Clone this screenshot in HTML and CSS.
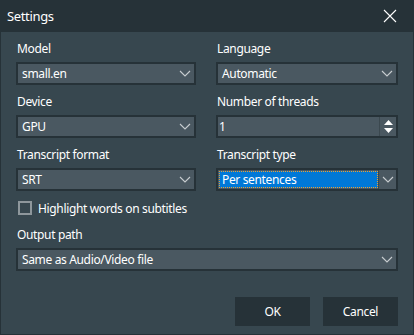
FILE: index.html
```html
<!DOCTYPE html>
<html lang="en">
<head>
    <meta charset="UTF-8">
    <meta name="viewport" content="width=device-width, initial-scale=1.0">
    <title>Settings</title>
    <link rel="stylesheet" href="styles.css">
</head>
<body>
    <div class="window">
        <div class="titlebar">
            <span class="title">Settings</span>
            <svg class="close" width="14" height="14" viewBox="0 0 14 14">
                <path d="M1 1 L13 13 M13 1 L1 13" stroke="#ffffff" stroke-width="1.1" fill="none"/>
            </svg>
        </div>

        <div class="content">
            <div class="grid">
                <div class="field">
                    <label>Model</label>
                    <div class="combo">
                        <span class="value">small.en</span>
                        <svg class="chevron" width="12" height="7" viewBox="0 0 12 7"><path d="M1 1 L6 6 L11 1" stroke="#c8cdd0" stroke-width="1.1" fill="none"/></svg>
                    </div>
                </div>
                <div class="field">
                    <label>Language</label>
                    <div class="combo">
                        <span class="value">Automatic</span>
                        <svg class="chevron" width="12" height="7" viewBox="0 0 12 7"><path d="M1 1 L6 6 L11 1" stroke="#c8cdd0" stroke-width="1.1" fill="none"/></svg>
                    </div>
                </div>

                <div class="field">
                    <label>Device</label>
                    <div class="combo">
                        <span class="value">GPU</span>
                        <svg class="chevron" width="12" height="7" viewBox="0 0 12 7"><path d="M1 1 L6 6 L11 1" stroke="#c8cdd0" stroke-width="1.1" fill="none"/></svg>
                    </div>
                </div>
                <div class="field">
                    <label>Number of threads</label>
                    <div class="combo spin">
                        <span class="value">1</span>
                        <div class="spin-buttons">
                            <svg width="9" height="5" viewBox="0 0 9 5"><path d="M0 5 L4.5 0 L9 5 Z" fill="#ffffff"/></svg>
                            <svg width="9" height="5" viewBox="0 0 9 5"><path d="M0 0 L4.5 5 L9 0 Z" fill="#ffffff"/></svg>
                        </div>
                    </div>
                </div>

                <div class="field">
                    <label>Transcript format</label>
                    <div class="combo">
                        <span class="value">SRT</span>
                        <svg class="chevron" width="12" height="7" viewBox="0 0 12 7"><path d="M1 1 L6 6 L11 1" stroke="#c8cdd0" stroke-width="1.1" fill="none"/></svg>
                    </div>
                </div>
                <div class="field">
                    <label>Transcript type</label>
                    <div class="combo focused">
                        <span class="value selected">Per sentences</span>
                        <div class="arrow-box">
                            <svg class="chevron" width="12" height="7" viewBox="0 0 12 7"><path d="M1 1 L6 6 L11 1" stroke="#c8cdd0" stroke-width="1.1" fill="none"/></svg>
                        </div>
                    </div>
                </div>
            </div>

            <div class="check-row">
                <span class="checkbox"></span>
                <span>Highlight words on subtitles</span>
            </div>

            <div class="field">
                <label>Output path</label>
                <div class="combo">
                    <span class="value">Same as Audio/Video file</span>
                    <svg class="chevron" width="12" height="7" viewBox="0 0 12 7"><path d="M1 1 L6 6 L11 1" stroke="#c8cdd0" stroke-width="1.1" fill="none"/></svg>
                </div>
            </div>

            <div class="buttons">
                <button>OK</button>
                <button>Cancel</button>
            </div>
        </div>
    </div>
</body>
</html>
```

FILE: styles.css
```css
* {
    box-sizing: border-box;
}

body {
    margin: 0;
    padding: 0;
    background-color: #263238;
    font-family: "Noto Sans", "Open Sans", sans-serif;
    font-size: 12px;
    letter-spacing: -0.35px;
    color: #ffffff;
}

.window {
    width: 414px;
    height: 335px;
    background-color: #263238;
    padding: 0 1px 1px 1px;
    display: flex;
    flex-direction: column;
}

.titlebar {
    height: 32px;
    display: flex;
    align-items: center;
    justify-content: space-between;
    padding: 0 16px 0 6px;
}

.title {
    font-size: 13px;
    margin-top: -1px;
}

.close {
    margin-top: -1px;
}

.content {
    flex: 1;
    background-color: #37474f;
    padding: 9px 15px 8px 15px;
    display: flex;
    flex-direction: column;
}

.grid {
    display: grid;
    grid-template-columns: 180px 182px;
    column-gap: 20px;
    row-gap: 9px;
}

.field {
    display: flex;
    flex-direction: column;
}

.field label {
    height: 16px;
    line-height: 16px;
    margin-bottom: 5px;
    padding-left: 1px;
}

.combo {
    height: 23px;
    background-color: #4a5861;
    border: 2px solid #263238;
    display: flex;
    align-items: center;
    justify-content: space-between;
    padding: 0 3px 0 4px;
}

.combo .value {
    line-height: 17px;
}

.combo.spin {
    padding: 0 0 0 1px;
}

.spin-buttons {
    height: 100%;
    width: 17px;
    border-left: 1px solid #3b484f;
    display: flex;
    flex-direction: column;
    align-items: center;
    justify-content: center;
    gap: 3px;
}

.combo.focused {
    padding: 0;
}

.value.selected {
    flex: 1;
    height: 17px;
    margin-left: 1px;
    padding-left: 3px;
    background-color: #0078d7;
    outline: 1px dotted #f0a030;
    outline-offset: -1px;
}

.arrow-box {
    width: 18px;
    height: 100%;
    border-left: 1px solid #37474f;
    display: flex;
    align-items: center;
    justify-content: center;
}

.check-row {
    display: flex;
    align-items: center;
    gap: 6px;
    height: 16px;
    margin: 9px 0 11px 2px;
}

.checkbox {
    width: 14px;
    height: 14px;
    border: 2px solid #8e979c;
    background-color: #37474f;
}

.buttons {
    margin-top: auto;
    display: flex;
    justify-content: flex-end;
    gap: 13px;
}

button {
    width: 75px;
    height: 29px;
    background-color: #263238;
    color: #ffffff;
    border: none;
    font-family: inherit;
    font-size: 12px;
    letter-spacing: inherit;
    padding: 0;
}
```
